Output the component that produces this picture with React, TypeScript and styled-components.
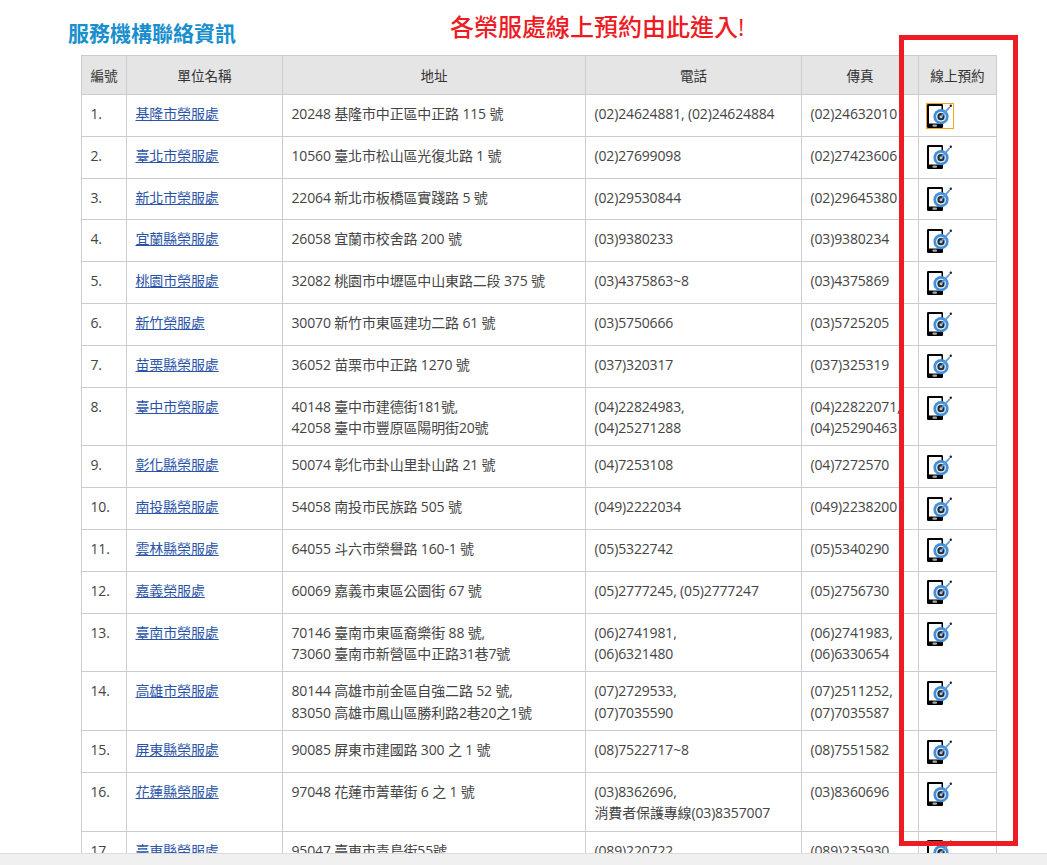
import React from 'react';
import styled, { createGlobalStyle } from 'styled-components';

const GlobalStyle = createGlobalStyle`
  html, body {
    margin: 0;
    height: 100%;
    overflow: hidden;
    background: #fff;
  }
  body {
    font-family: 'Open Sans', 'Noto Sans CJK TC', sans-serif;
    font-size: 14px;
    color: #444;
  }
`;

const Page = styled.div`
  position: relative;
  height: 865px;
  overflow: hidden;
`;

const TitleRow = styled.header`
  display: flex;
  align-items: flex-start;
  height: 55px;
  padding-left: 68px;
`;

const Title = styled.h2`
  margin: 19px 0 0;
  width: 382px;
  font-size: 21px;
  line-height: 28px;
  font-weight: 700;
  color: #1a8fce;
`;

const Notice = styled.p`
  margin: 10px 0 0;
  font-size: 24px;
  line-height: 34px;
  font-weight: 500;
  color: #ed1c24;
`;

const TableWrap = styled.div`
  padding-left: 81px;
`;

const Table = styled.table`
  width: 915px;
  table-layout: fixed;
  border-collapse: collapse;
`;

const Head = styled.th`
  height: 38px;
  padding: 0;
  background: #e5e5e5;
  border: 1px solid #ccc;
  font-weight: 400;
  font-size: 13.6px;
  line-height: 21px;
  color: #333;
  text-align: center;
`;

const Cell = styled.td`
  height: 41.8px;
  box-sizing: border-box;
  padding: 8px 9px 7px 8.5px;
  border: 1px solid #ccc;
  line-height: 21.4px;
  letter-spacing: -0.15px;
  vertical-align: top;
  white-space: nowrap;
`;

const IconCell = styled(Cell)`
  padding: 8.5px 8px 0;
`;

const UnitLink = styled.a`
  color: #2b54a8;
  text-decoration: underline;
`;

const IconLink = styled.a<{ $focused?: boolean }>`
  display: block;
  width: 26px;
  height: 24px;
  outline: ${p => (p.$focused ? '1px solid #f9a11b' : 'none')};
`;

const RedFrame = styled.div`
  position: absolute;
  left: 899px;
  top: 35px;
  width: 109px;
  height: 801px;
  border: 5px solid #ed1c24;
  pointer-events: none;
`;

const BottomBar = styled.div`
  position: fixed;
  left: 0;
  right: 0;
  bottom: 0;
  height: 11px;
  background: #f0f0f0;
  border-top: 1px solid #dcdcdc;
`;

function BookingIcon() {
  return (
    <svg width="26" height="24" viewBox="0 0 26 24" style={{ display: 'block' }}>
      <rect x="0" y="0" width="16" height="24" rx="1.2" fill="#000" />
      <rect x="2" y="2" width="12.5" height="17.5" fill="#fff" />
      <rect x="5.5" y="20.5" width="4.5" height="2.2" rx="0.8" fill="#aaa" />
      <circle cx="14" cy="12.7" r="7.6" fill="#3f8fdc" />
      <circle cx="14" cy="12.7" r="5" fill="#dce9f5" />
      <circle cx="14" cy="12.7" r="3.6" fill="#26292e" />
      <circle cx="14" cy="12.7" r="1.5" fill="#a7c8ea" />
      <path d="M14.5 12.2 L22.8 3" stroke="#5b9bdc" strokeWidth="1.8" fill="none" />
      <circle cx="23.8" cy="1.8" r="1.2" fill="#222" />
    </svg>
  );
}

type Office = {
  name: string;
  address: string[];
  phone: string[];
  fax: string[];
};

const offices: Office[] = [
  { name: '基隆市榮服處', address: ['20248 基隆市中正區中正路 115 號'], phone: ['(02)24624881, (02)24624884'], fax: ['(02)24632010'] },
  { name: '臺北市榮服處', address: ['10560 臺北市松山區光復北路 1 號'], phone: ['(02)27699098'], fax: ['(02)27423606'] },
  { name: '新北市榮服處', address: ['22064 新北市板橋區實踐路 5 號'], phone: ['(02)29530844'], fax: ['(02)29645380'] },
  { name: '宜蘭縣榮服處', address: ['26058 宜蘭市校舍路 200 號'], phone: ['(03)9380233'], fax: ['(03)9380234'] },
  { name: '桃園市榮服處', address: ['32082 桃園市中壢區中山東路二段 375 號'], phone: ['(03)4375863~8'], fax: ['(03)4375869'] },
  { name: '新竹榮服處', address: ['30070 新竹市東區建功二路 61 號'], phone: ['(03)5750666'], fax: ['(03)5725205'] },
  { name: '苗栗縣榮服處', address: ['36052 苗栗市中正路 1270 號'], phone: ['(037)320317'], fax: ['(037)325319'] },
  { name: '臺中市榮服處', address: ['40148 臺中市建德街181號,', '42058 臺中市豐原區陽明街20號'], phone: ['(04)22824983,', '(04)25271288'], fax: ['(04)22822071,', '(04)25290463'] },
  { name: '彰化縣榮服處', address: ['50074 彰化市卦山里卦山路 21 號'], phone: ['(04)7253108'], fax: ['(04)7272570'] },
  { name: '南投縣榮服處', address: ['54058 南投市民族路 505 號'], phone: ['(049)2222034'], fax: ['(049)2238200'] },
  { name: '雲林縣榮服處', address: ['64055 斗六市榮譽路 160-1 號'], phone: ['(05)5322742'], fax: ['(05)5340290'] },
  { name: '嘉義榮服處', address: ['60069 嘉義市東區公園街 67 號'], phone: ['(05)2777245, (05)2777247'], fax: ['(05)2756730'] },
  { name: '臺南市榮服處', address: ['70146 臺南市東區裔樂街 88 號,', '73060 臺南市新營區中正路31巷7號'], phone: ['(06)2741981,', '(06)6321480'], fax: ['(06)2741983,', '(06)6330654'] },
  { name: '高雄市榮服處', address: ['80144 高雄市前金區自強二路 52 號,', '83050 高雄市鳳山區勝利路2巷20之1號'], phone: ['(07)2729533,', '(07)7035590'], fax: ['(07)2511252,', '(07)7035587'] },
  { name: '屏東縣榮服處', address: ['90085 屏東市建國路 300 之 1 號'], phone: ['(08)7522717~8'], fax: ['(08)7551582'] },
  { name: '花蓮縣榮服處', address: ['97048 花蓮市菁華街 6 之 1 號'], phone: ['(03)8362696,', '消費者保護專線(03)8357007'], fax: ['(03)8360696'] },
  { name: '臺東縣榮服處', address: ['95047 臺東市青島街55號'], phone: ['(089)220722'], fax: ['(089)235930'] },
];

function Lines({ items }: { items: string[] }) {
  return (
    <>
      {items.map((line, i) => (
        <React.Fragment key={line}>
          {i > 0 && <br />}
          {line}
        </React.Fragment>
      ))}
    </>
  );
}

export default function App() {
  return (
    <Page>
      <GlobalStyle />
      <TitleRow>
        <Title>服務機構聯絡資訊</Title>
        <Notice>各榮服處線上預約由此進入!</Notice>
      </TitleRow>
      <TableWrap>
        <Table>
          <colgroup>
            <col width="45" />
            <col width="156" />
            <col width="303" />
            <col width="216" />
            <col width="117" />
            <col width="78" />
          </colgroup>
          <thead>
            <tr>
              <Head>編號</Head>
              <Head>單位名稱</Head>
              <Head>地址</Head>
              <Head>電話</Head>
              <Head>傳真</Head>
              <Head>線上預約</Head>
            </tr>
          </thead>
          <tbody>
            {offices.map((office, i) => (
              <tr key={office.name}>
                <Cell>{i + 1}.</Cell>
                <Cell>
                  <UnitLink href="#">{office.name}</UnitLink>
                </Cell>
                <Cell>
                  <Lines items={office.address} />
                </Cell>
                <Cell>
                  <Lines items={office.phone} />
                </Cell>
                <Cell>
                  <Lines items={office.fax} />
                </Cell>
                <IconCell>
                  <IconLink href="#" $focused={i === 0}>
                    <BookingIcon />
                  </IconLink>
                </IconCell>
              </tr>
            ))}
          </tbody>
        </Table>
      </TableWrap>
      <RedFrame />
      <BottomBar />
    </Page>
  );
}
